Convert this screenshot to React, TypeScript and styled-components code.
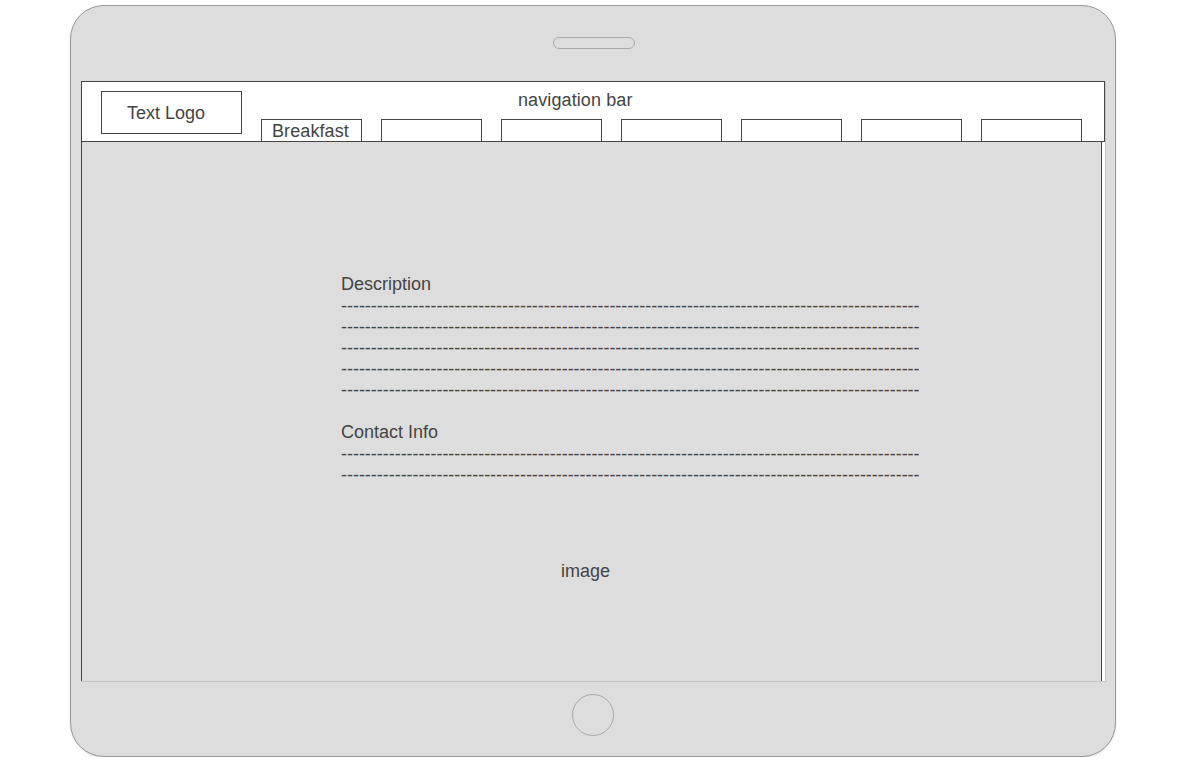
import styled, { createGlobalStyle } from "styled-components";

const GlobalStyle = createGlobalStyle`
  html, body {
    margin: 0;
    padding: 0;
    background: #fff;
  }
  body {
    font-family: "Liberation Sans", Arial, sans-serif;
    color: #444;
  }
  * {
    box-sizing: border-box;
  }
`;

const DASHES = "-".repeat(97);
const TABS = ["Breakfast", "", "", "", "", "", ""];

export default function App() {
  return (
    <>
      <GlobalStyle />
      <Page>
        <Device>
          <TopBezel>
            <Speaker />
          </TopBezel>
          <Screen>
            <NavBar>
              <LogoBox>Text Logo</LogoBox>
              <NavRight>
                <NavTitle>navigation bar</NavTitle>
                <TabRow>
                  {TABS.map((label, i) => (
                    <Tab key={i}>{label}</Tab>
                  ))}
                </TabRow>
              </NavRight>
            </NavBar>
            <Content>
              <Section>
                <Heading>Description</Heading>
                {[0, 1, 2, 3, 4].map((i) => (
                  <DashLine key={i}>{DASHES}</DashLine>
                ))}
              </Section>
              <Section>
                <Heading>Contact Info</Heading>
                {[0, 1].map((i) => (
                  <DashLine key={i}>{DASHES}</DashLine>
                ))}
              </Section>
              <ImageLabel>image</ImageLabel>
            </Content>
          </Screen>
          <BottomBezel>
            <HomeButton />
          </BottomBezel>
        </Device>
      </Page>
    </>
  );
}

const Page = styled.div`
  padding: 5px 0 0 70px;
`;

const Device = styled.div`
  width: 1046px;
  height: 752px;
  background: #dddddd;
  border: 1px solid #999;
  border-radius: 34px;
  box-shadow: 0 1px 2px rgba(0, 0, 0, 0.12);
  display: flex;
  flex-direction: column;
  padding: 0 9px 0 10px;
`;

const TopBezel = styled.div`
  height: 75px;
  display: flex;
  justify-content: center;
  padding-top: 31px;
`;

const Speaker = styled.div`
  width: 82px;
  height: 12px;
  border: 1px solid #aaa;
  border-radius: 6px;
`;

const Screen = styled.div`
  width: 1025px;
  height: 601px;
  background: #fff;
  border-right: 1px solid #c6c6c6;
  border-bottom: 1px solid #c6c6c6;
  display: flex;
  flex-direction: column;
`;

const NavBar = styled.div`
  height: 61px;
  width: 1024px;
  border: 1px solid #444;
  background: #fff;
  display: flex;
  gap: 19px;
  padding: 9px 0 0 19px;
  font-size: 18px;
`;

const LogoBox = styled.div`
  width: 141px;
  height: 43px;
  border: 1px solid #444;
  display: flex;
  align-items: center;
  padding: 2px 0 0 25px;
  line-height: 21px;
`;

const NavRight = styled.div`
  flex: 1;
  display: flex;
  flex-direction: column;
`;

const NavTitle = styled.div`
  line-height: 19px;
  margin-left: 257px;
  letter-spacing: 0.1px;
`;

const TabRow = styled.div`
  display: flex;
  gap: 19px;
  margin-top: auto;
`;

const Tab = styled.div`
  width: 101px;
  height: 22px;
  border: 1px solid #444;
  border-bottom: none;
  padding-left: 10px;
  line-height: 23px;
  white-space: nowrap;
  overflow: hidden;
  letter-spacing: 0.1px;
`;

const Content = styled.div`
  flex: 1;
  width: 1021px;
  background: #dddddd;
  border-left: 1px solid #444;
  border-right: 1px solid #444;
  display: flex;
  flex-direction: column;
  gap: 20px;
  padding: 131px 0 0 259px;
  font-size: 18px;
`;

const Section = styled.div`
  display: flex;
  flex-direction: column;
`;

const Heading = styled.div`
  line-height: 23px;
`;

const DashLine = styled.div`
  line-height: 21px;
  white-space: nowrap;
  letter-spacing: -0.03px;
`;

const ImageLabel = styled.div`
  line-height: 21px;
  margin: 55px 0 0 220px;
`;

const BottomBezel = styled.div`
  flex: 1;
  display: flex;
  justify-content: center;
  padding-top: 12px;
`;

const HomeButton = styled.div`
  width: 42px;
  height: 42px;
  border-radius: 50%;
  border: 1px solid #aaa;
  margin-right: 2px;
`;
